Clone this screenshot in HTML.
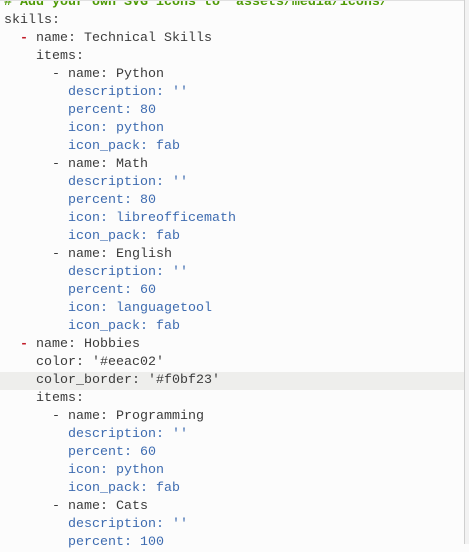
<!DOCTYPE html>
<html><head><meta charset="utf-8"><style>
html,body{margin:0;padding:0;}
body{width:469px;height:544px;overflow:hidden;background:#fcfcfc;position:relative;font-family:"Liberation Mono",monospace;font-size:13.33px;color:#3b3b3b;}
.wrap{position:absolute;left:4px;top:-6px;right:0;}
.l{height:18px;line-height:18px;white-space:pre;position:relative;}
.hl{background:#eeeeec;margin-left:-4px;padding-left:4px;width:461px;}
.c{color:#4e9a06;font-weight:bold;}
.d{color:#c01c28;font-weight:bold;}
.b{color:#3d6bb0;}
.rb{position:absolute;right:0;top:0;width:4px;height:544px;background:#f2f2f2;border-left:1px solid #cfcfcf;}
.tb{position:absolute;left:0;top:0;width:469px;height:1px;background:#e0e0e0;}
</style></head><body>
<div class="wrap">
<div class="l c"># Add your own SVG icons to `assets/media/icons/`</div>
<div class="l">skills:</div>
<div class="l">  <span class="d">-</span> name: Technical Skills</div>
<div class="l">    items:</div>
<div class="l">      - name: Python</div>
<div class="l b">        description: ''</div>
<div class="l b">        percent: 80</div>
<div class="l b">        icon: python</div>
<div class="l b">        icon_pack: fab</div>
<div class="l">      - name: Math</div>
<div class="l b">        description: ''</div>
<div class="l b">        percent: 80</div>
<div class="l b">        icon: libreofficemath</div>
<div class="l b">        icon_pack: fab</div>
<div class="l">      - name: English</div>
<div class="l b">        description: ''</div>
<div class="l b">        percent: 60</div>
<div class="l b">        icon: languagetool</div>
<div class="l b">        icon_pack: fab</div>
<div class="l">  <span class="d">-</span> name: Hobbies</div>
<div class="l">    color: '#eeac02'</div>
<div class="l hl">    color_border: '#f0bf23'</div>
<div class="l">    items:</div>
<div class="l">      - name: Programming</div>
<div class="l b">        description: ''</div>
<div class="l b">        percent: 60</div>
<div class="l b">        icon: python</div>
<div class="l b">        icon_pack: fab</div>
<div class="l">      - name: Cats</div>
<div class="l b">        description: ''</div>
<div class="l b">        percent: 100</div>
</div>
<div class="tb"></div>
<div class="rb"></div>
</body></html>
